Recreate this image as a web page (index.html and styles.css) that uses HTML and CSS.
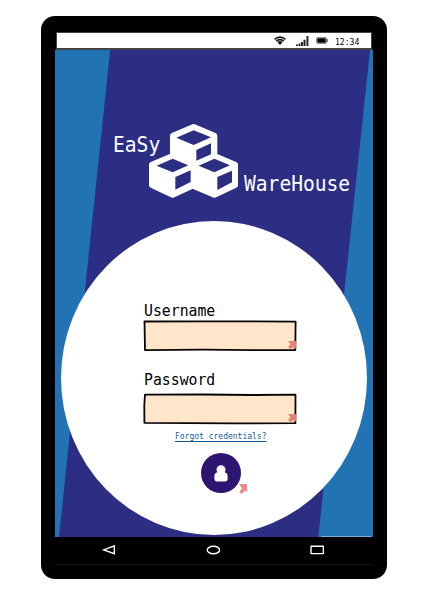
FILE: index.html
```
<!DOCTYPE html>
<html lang="en">
<head>
<meta charset="utf-8">
<title>EaSy WareHouse</title>
<link rel="stylesheet" href="styles.css">
</head>
<body>
<main class="phone">
  <header class="status">
    <svg class="wifi" viewBox="0 0 12 9"><path d="M.5 3.4Q6-1.3 11.5 3.4M2.2 5.1Q6 2 9.8 5.1M3.9 6.8Q6 5 8.1 6.8" fill="none" stroke="#111" stroke-width="1.6"/><circle cx="6" cy="7.6" r="1.1"/></svg>
    <svg class="signal" viewBox="0 0 13 10"><path d="M0 8.4h2V10H0zM2.6 7.6h1.8V10H2.6zM5 6h1.9v4H5zM7.5 3.8h2V10h-2zM10.5 0h1.9v10h-1.9z" fill="#222"/></svg>
    <svg class="battery" viewBox="0 0 12 7"><rect x=".5" y=".5" width="10" height="6" rx="1" fill="#ddd" stroke="#8a8a8a"/><path d="M1.4 1.3h8.3v4.4H1.4z"/><path d="M11 2h1v3h-1z" fill="#777"/></svg>
    <span class="clock">12:34</span>
  </header>
  <section class="screen">
    <svg class="backdrop" viewBox="0 0 318 487" preserveAspectRatio="none">
      <path d="M0 0H55.2L4 487H0zM315 0h3v487H263.3z" fill="#2173b4"/>
      <path d="M266 486.5h50" stroke="#78afd6"/>
    </svg>
    <div class="brand">
      <span class="easy">EaSy</span>
      <svg class="cubes" viewBox="147 27 267 222">
        <g fill="#fff" stroke="#fff" stroke-width="18" stroke-linejoin="round">
          <path d="M281 36L343 62V124L281 148L219 124V62z"/>
          <path d="M218 123L275 148V213L218 239L156 210V149z"/>
          <path d="M343 123L405 149V210L343 239L281 213V148z"/>
        </g>
        <g fill="#2b2e83">
          <path d="M229 68L281 46L333 67L281 90zM289 105L333 85V118L289 137z"/>
          <path d="M170 152L218 131L265 151L218 172zM226 186L272 166V201L226 224z"/>
          <path d="M296 152L343 131L390 151L343 172zM352 186L396 167V202L352 225z"/>
        </g>
      </svg>
      <span class="warehouse">WareHouse</span>
    </div>
    <form class="login">
      <label class="label" for="user">Username</label>
      <div class="field">
        <input id="user" type="text">
        <svg class="frame" viewBox="0 0 154 32"><path d="M1.5 1.5L60 1.3L152.6 1.6L152.3 30L110 30.2L60 29.6L2 30.1z" fill="none" stroke="#080604" stroke-width="1.8" stroke-linejoin="round"/></svg>
        <svg class="mark" viewBox="0 0 8 8"><path d="M0 0H8V8L5.8 5.8L2.6 8L0 6L2.6 3.2z"/></svg>
      </div>
      <label class="label second" for="pass">Password</label>
      <div class="field lower">
        <input id="pass" type="password">
        <svg class="frame" viewBox="0 0 154 32"><path d="M2 1.6L60 1.5L110 2L152.5 1.7L152.4 30.2L90 30.4L1.4 29.8L1.3 12z" fill="none" stroke="#080604" stroke-width="1.8" stroke-linejoin="round"/></svg>
        <svg class="mark" viewBox="0 0 8 8"><path d="M0 0H8V8L5.8 5.8L2.6 8L0 6L2.6 3.2z"/></svg>
      </div>
      <a class="forgot" href="#">Forgot credentials?</a>
      <button class="enter" type="button">
        <svg class="person" viewBox="0 0 14 17"><path d="M.4 14V11Q.5 7.7 3.4 7.3Q2.5 6 2.5 4.6A4.5 4.4 0 0 1 11.5 4.6Q11.5 6 10.6 7.3Q13.5 7.7 13.6 11V14Q13.6 16.4 11 16.4H3Q.4 16.4.4 14z" fill="#fff"/></svg>
        <svg class="mark outside" viewBox="0 0 8 10" preserveAspectRatio="none"><path d="M0 0H8V8L6 6.4L2.4 10L.4 8.2L3 4.2z"/></svg>
      </button>
    </form>
  </section>
  <nav class="nav">
    <svg viewBox="0 0 14 10"><path d="M12.3.9V8.7L1.6 4.8z"/></svg>
    <svg viewBox="0 0 14 10"><ellipse cx="7.4" cy="5" rx="6.2" ry="3.8"/></svg>
    <svg viewBox="0 0 14 10"><rect x="1" y="1.2" width="12.4" height="7.4" rx=".3"/></svg>
  </nav>
</main>
</body>
</html>
```
FILE: styles.css
```
* { box-sizing: border-box; }

body {
  margin: 0;
  padding: 16px 0 0 41px;
  height: 603px;
  overflow: hidden;
  background: #fff;
  font-family: "DejaVu Sans Mono", monospace;
}

svg { display: block; flex: none; }

.phone {
  width: 346px;
  height: 563px;
  padding: 16px 14px 0;
  border-radius: 14px;
  background: #000;
}

.status {
  display: flex;
  align-items: center;
  height: 18px;
  margin: 0 1px;
  padding-left: 217px;
  background: #fff;
  border: 1px solid #444;
  border-bottom-width: 2px;
}

.wifi { width: 12px; height: 9px; }
.signal { width: 13px; height: 10px; margin-left: 10px; }
.battery { width: 12px; height: 7px; margin-left: 7px; }
.clock { margin-left: 7px; padding-top: 2px; font-size: 8.1px; line-height: 10px; }

.screen {
  position: relative;
  height: 487px;
  padding-top: 74px;
  background: #2b2e83;
}

.backdrop { position: absolute; inset: 0; width: 318px; height: 487px; }

.brand {
  position: relative;
  display: flex;
  height: 74px;
  padding-left: 58px;
  color: #fff;
  font-size: 19.6px;
  line-height: 24px;
  white-space: nowrap;
}

.easy { width: 36px; height: 24px; margin-top: 10px; transform: scaleY(1.06); }
.cubes { width: 89px; height: 74px; }
.warehouse { height: 24px; margin: 49px 0 0 6px; transform: scaleY(1.06); }

.login {
  position: relative;
  display: flex;
  flex-direction: column;
  align-items: flex-start;
  width: 306px;
  height: 314px;
  margin: 23px 0 0 6px;
  padding: 81px 0 0 83px;
  border-radius: 50%;
  background: #fff;
}

.label { height: 18px; font-size: 14.8px; line-height: 18px; transform: scaleY(1.08); }
.second { margin-top: 19px; }

.field { position: relative; width: 154px; height: 32px; margin-left: -1px; }
.lower { margin-top: 4px; }
.field input {
  display: block;
  position: relative;
  top: 1px;
  width: 152px;
  height: 29px;
  margin: 0 1px;
  padding: 0 6px;
  border: 0;
  background: #ffe5c9;
  font: inherit;
}
.frame { position: absolute; inset: 0; width: 154px; height: 32px; pointer-events: none; }
.mark { position: absolute; right: 1px; bottom: 3px; width: 8px; height: 8px; fill: #e67e72; }

.forgot {
  width: 92px;
  height: 12px;
  margin: 6px 0 0 31px;
  color: #145a96;
  font-size: 8px;
  line-height: 12px;
  text-underline-offset: 2px;
  white-space: nowrap;
}

.enter {
  position: relative;
  display: flex;
  align-items: center;
  justify-content: center;
  width: 40px;
  height: 40px;
  margin: 10px 0 0 57px;
  padding: 0;
  border: 0;
  border-radius: 50%;
  background: #2d1570;
}

.person { width: 14px; height: 17px; }
.outside { right: -6px; bottom: -1px; width: 8px; height: 10px; fill: #e88b83; }

.nav {
  display: flex;
  justify-content: space-between;
  height: 28px;
  padding: 8px 49px 0 47px;
  border-bottom: 1px solid #151515;
}

.nav svg { width: 14px; height: 10px; fill: none; stroke: #fff; stroke-width: 1.4; }
```
